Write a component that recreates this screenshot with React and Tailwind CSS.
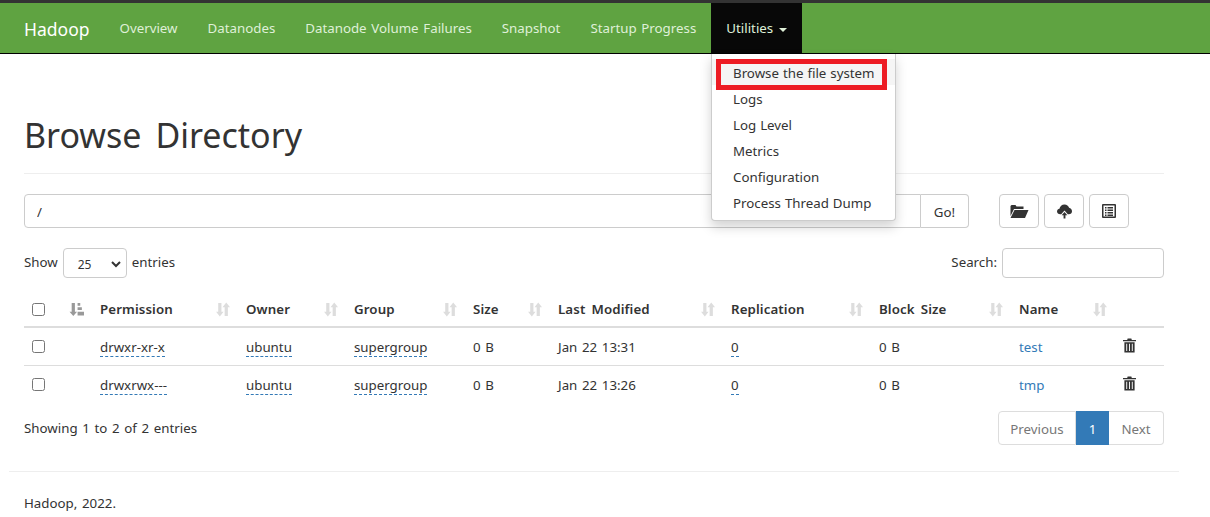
import React from 'react';

const FONT = { fontFamily: '"Noto Sans", sans-serif' };

const navLinks = ['Overview', 'Datanodes', 'Datanode Volume Failures', 'Snapshot', 'Startup Progress'];
const menuItems = ['Logs', 'Log Level', 'Metrics', 'Configuration', 'Process Thread Dump'];

const columns = [
  { label: 'Permission', width: 'w-[146px]' },
  { label: 'Owner', width: 'w-[108px]' },
  { label: 'Group', width: 'w-[119px]' },
  { label: 'Size', width: 'w-[85px]' },
  { label: 'Last Modified', width: 'w-[173px]' },
  { label: 'Replication', width: 'w-[148px]' },
  { label: 'Block Size', width: 'w-[140px]' },
  { label: 'Name', width: 'w-[104px]' },
];

const rows = [
  { perm: 'drwxr-xr-x', time: 'Jan 22 13:31', name: 'test' },
  { perm: 'drwxrwx---', time: 'Jan 22 13:26', name: 'tmp' },
];

const SortIcon = () => (
  <svg width="15" height="15" viewBox="0 0 14 14" className="fill-[#dddddd]">
    <path d="M3 1h3v8h2l-3.500 4.500L1 9h2z" />
    <path d="M9 13h3V5h2l-3.500-4.500L7 5h2z" />
  </svg>
);

const SortActive = () => (
  <svg width="15" height="15" viewBox="0 0 14 14" className="fill-[#999999]">
    <path d="M2.500 1h3v8h2L4 13 .5 9h2z" />
    <path d="M8 1h2.500v2.500H8zM8 5h4v2.500H8zM8 9h6v3.500H8z" />
  </svg>
);

const TrashIcon = () => (
  <svg width="13" height="15" viewBox="0 0 14 15" className="-mt-[2px] fill-[#333333]">
    <path d="M5 0h4l.5 1.500H14V3H0V1.500h4.500z" />
    <path d="M1.500 4h11v11h-11zM3.500 5.500v8h1v-8zm3 0v8h1v-8zm3 0v8h1v-8z" fillRule="evenodd" />
  </svg>
);

const FolderIcon = () => (
  <svg width="19" height="14" viewBox="0 0 18 14" className="fill-[#333333]">
    <path d="M1 1h4l1 1.500h7V5H3.500L0 12V2z" />
    <path d="M4 6h14l-3.500 8H0z" />
  </svg>
);

const CloudIcon = () => (
  <svg width="15" height="15" viewBox="0 0 16 15" className="fill-[#333333]">
    <path d="M3.500 10.500C1.500 10.500 0 9.200 0 7.500s1.300-2.800 2.600-2.900C3 2.200 5.200 0 8 0c2.400 0 4.300 1.500 4.900 3.600 1.800.2 3.100 1.900 3.100 3.700 0 1.800-1.400 3.200-3.300 3.200h-1.200L8 6.500l-3.500 4z" />
    <path d="M8 8l3 3.500H9V15H7v-3.500H5z" />
  </svg>
);

const ListIcon = () => (
  <svg width="14" height="14" viewBox="0 0 14 14" className="fill-[#333333]">
    <path
      fillRule="evenodd"
      d="M1 0h12a1 1 0 0 1 1 1v12a1 1 0 0 1-1 1H1a1 1 0 0 1-1-1V1a1 1 0 0 1 1-1zm.5 1.500v11h11v-11zM3 3h1.500v1.500H3zm2.500 0H11v1.500H5.500zM3 5.500h1.500V7H3zm2.500 0H11V7H5.500zM3 8h1.500v1.500H3zm2.500 0H11v1.500H5.500zM3 10.500h1.500V12H3zm2.500 0H11V12H5.500z"
    />
  </svg>
);

const IconButton = ({ children }) => (
  <button className="flex h-[34px] w-10 items-center justify-center rounded border border-[#cccccc] bg-white">
    {children}
  </button>
);

const Underlined = ({ children }) => (
  <span className="inline-block border-b border-dashed border-[#337ab7] leading-[17px]">{children}</span>
);

const App = () => {
  return (
    <div className="relative h-[517px] w-[1210px] overflow-hidden bg-white text-[13.3px] text-[#333333] [word-spacing:1.2px]" style={FONT}>
      {/* Navbar */}
      <nav className="flex h-[54px] items-stretch border-t-[3px] border-b border-t-[#333333] border-b-[#000000] bg-[#5fa341] pl-[9px]">
        <a className="flex items-center px-[15px] pt-[2px] text-[17.5px] text-white">Hadoop</a>
        {navLinks.map((link) => (
          <a key={link} className="flex items-center px-[15px] pt-[2px] text-[#dff0d8]">{link}</a>
        ))}
        <a className="flex items-center gap-[6px] bg-[#080808] px-[15px] pt-[2px] text-[#dff0d8]">
          Utilities
          <span className="mt-[2px] border-x-4 border-t-4 border-x-transparent border-t-[#dff0d8]" />
        </a>
      </nav>

      {/* Utilities menu */}
      <div className="absolute left-[711px] top-[54px] z-10 w-[185px] whitespace-nowrap rounded-b border border-t-0 border-[#cccccc] bg-white py-[5px] shadow-[0_6px_12px_rgba(0,0,0,0.175)] [word-spacing:0.5px]">
        <div className="relative flex h-[26px] items-center bg-[#f5f5f5] px-[21px] pt-[4px]">
          Browse the file system
          <span className="absolute left-[4px] top-0 h-[31px] w-[171px] border-[5px] border-[#ed1c24]" />
        </div>
        {menuItems.map((item) => (
          <div key={item} className="flex h-[26px] items-center px-[21px] pt-[4px]">{item}</div>
        ))}
      </div>

      {/* Page body */}
      <main className="mx-6 w-[1140px]">
        <div className="border-b border-[#eeeeee] pt-[58px] pb-[15px]">
          <h1 className="text-[34px] leading-[46px] font-normal [word-spacing:5px]">Browse Directory</h1>
        </div>

        <div className="mt-5 flex items-start">
          <div className="flex w-[945px]">
            <input
              readOnly
              value="/"
              className="h-[34px] flex-1 rounded-l border border-[#cccccc] bg-white px-3 pt-[2px] text-[13.3px] outline-none"
            />
            <button className="h-[34px] w-12 rounded-r border border-l-0 border-[#cccccc] bg-white pt-[4px]">Go!</button>
          </div>
          <div className="ml-[30px] flex gap-[5px]">
            <IconButton><FolderIcon /></IconButton>
            <IconButton><CloudIcon /></IconButton>
            <IconButton><ListIcon /></IconButton>
          </div>
        </div>

        <div className="mt-5 flex h-[30px] items-center justify-between">
          <div className="flex items-center gap-[5px]">
            <span>Show</span>
            <div className="flex h-[30px] w-[64px] items-center justify-between rounded border border-[#cccccc] pl-[14px] pr-[5px] pt-[3px] text-xs">
              25
              <svg width="10" height="7" viewBox="0 0 10 7" fill="none" stroke="#333333" strokeWidth="2">
                <path d="M1 1l4 4 4-4" />
              </svg>
            </div>
            <span>entries</span>
          </div>
          <div className="flex items-center gap-[5px]">
            <span>Search:</span>
            <input readOnly className="h-[30px] w-[162px] rounded border border-[#cccccc] bg-white" />
          </div>
        </div>

        {/* File listing */}
        <table className="mt-[14px] w-[1140px] table-fixed border-collapse">
          <colgroup>
            <col className="w-[38px]" />
            <col className="w-[30px]" />
            {columns.map((col) => <col key={col.label} className={col.width} />)}
            <col className="w-[49px]" />
          </colgroup>
          <thead>
            <tr className="h-[35px] border-b-2 border-[#dddddd]">
              <th className="pl-[8px] text-left font-normal">
                <input type="checkbox" readOnly className="block size-[13px]" />
              </th>
              <th className="pl-[7px] text-left font-normal"><SortActive /></th>
              {columns.map((col) => (
                <th key={col.label} className="px-2 text-left">
                  <div className="flex items-center justify-between font-semibold tracking-[0.1px] [word-spacing:2.5px]">
                    <span className="pt-[2px]">{col.label}</span>
                    <SortIcon />
                  </div>
                </th>
              ))}
              <th />
            </tr>
          </thead>
          <tbody>
            {rows.map((row, i) => (
              <tr key={row.name} className={`h-[38px] ${i === 0 ? 'border-b border-[#dddddd]' : ''}`}>
                <td className="pl-[8px]"><input type="checkbox" readOnly className="block size-[13px]" /></td>
                <td />
                <td className="px-2 pt-[3px]"><Underlined>{row.perm}</Underlined></td>
                <td className="px-2 pt-[3px]"><Underlined>ubuntu</Underlined></td>
                <td className="px-2 pt-[3px]"><Underlined>supergroup</Underlined></td>
                <td className="px-2 pt-[3px]">0 B</td>
                <td className="px-2 pt-[3px]">{row.time}</td>
                <td className="px-2 pt-[3px]"><Underlined>0</Underlined></td>
                <td className="px-2 pt-[3px]">0 B</td>
                <td className="px-2 pt-[3px] text-[#337ab7]">{row.name}</td>
                <td className="pl-2"><TrashIcon /></td>
              </tr>
            ))}
          </tbody>
        </table>

        <div className="mt-[8px] flex items-start justify-between">
          <span className="mt-[8px]">Showing 1 to 2 of 2 entries</span>
          <div className="flex h-[34px] text-[#777777]">
            <span className="flex w-[78px] items-center justify-center rounded-l border border-[#dddddd] pt-[4px]">Previous</span>
            <span className="flex w-[33px] items-center justify-center bg-[#337ab7] pt-[4px] text-white">1</span>
            <span className="flex w-[55px] items-center justify-center rounded-r border border-l-0 border-[#dddddd] pt-[4px]">Next</span>
          </div>
        </div>
      </main>

      {/* Footer */}
      <footer className="ml-[9px] mt-[26px] w-[1170px] border-t border-[#eeeeee] px-[15px] pt-[22px]">Hadoop, 2022.</footer>
    </div>
  );
};

export default App;
